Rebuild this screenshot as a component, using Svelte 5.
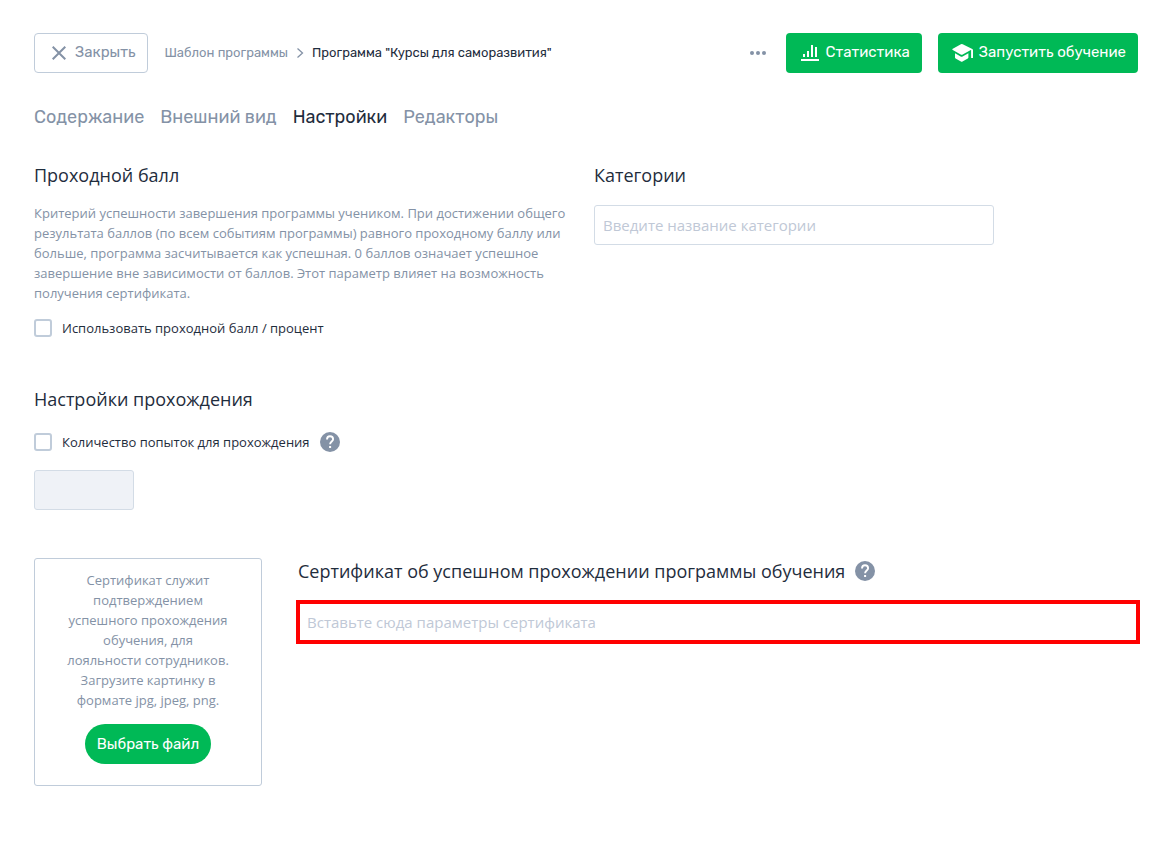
<script lang="ts">
  interface Tab {
    id: string;
    label: string;
  }

  const tabs: Tab[] = [
    { id: 'content', label: 'Содержание' },
    { id: 'appearance', label: 'Внешний вид' },
    { id: 'settings', label: 'Настройки' },
    { id: 'editors', label: 'Редакторы' }
  ];

  let activeTab = $state('settings');
  let usePassingScore = $state(false);
  let limitAttempts = $state(false);
  let attempts = $state('');
  let category = $state('');
  let certificateParams = $state('');

  function selectTab(event: MouseEvent, id: string): void {
    event.preventDefault();
    activeTab = id;
  }
</script>

{#snippet helpIcon()}
  <svg width="20" height="20" viewBox="0 0 20 20" aria-hidden="true">
    <circle cx="10" cy="10" r="10" fill="#8492a6" />
    <path d="M7 7.6C7 5.6 8.2 4.3 10 4.3s3.1 1.2 3.1 2.9c0 2.3-3 2.5-3 5" fill="none" stroke="#fff" stroke-width="1.9" />
    <rect x="9.1" y="14" width="2" height="2" fill="#fff" />
  </svg>
{/snippet}

<div class="page">
  <header class="topbar">
    <button type="button" class="close-button">
      <svg width="14" height="14" viewBox="0 0 14 14" aria-hidden="true">
        <path d="M.7.7l12.6 12.6M13.3.7L.7 13.3" stroke="#8492a6" stroke-width="2" />
      </svg>
      <span>Закрыть</span>
    </button>

    <nav class="breadcrumbs" aria-label="Навигация">
      <a href="#template">Шаблон программы</a>
      <svg width="8" height="12" viewBox="0 0 8 12" aria-hidden="true">
        <path d="M1.5 1.5L6.5 6l-5 4.5" fill="none" stroke="#8492a6" stroke-width="1.3" />
      </svg>
      <span>Программа "Курсы для саморазвития"</span>
    </nav>

    <div class="actions">
      <button type="button" class="more-button" aria-label="Ещё">
        <svg width="16" height="4" viewBox="0 0 16 4" aria-hidden="true">
          <circle cx="2" cy="2" r="2" />
          <circle cx="8" cy="2" r="2" />
          <circle cx="14" cy="2" r="2" />
        </svg>
      </button>
      <button type="button" class="primary stats">
        <svg width="18" height="16" viewBox="0 0 18 16" aria-hidden="true">
          <path d="M0 14h18v2H0zM2 9h2v3H2zM6 6h2v6H6zM10 0h2v12h-2zM14 2h2v10h-2z" fill="#fff" />
        </svg>
        <span>Статистика</span>
      </button>
      <button type="button" class="primary launch">
        <svg width="21" height="18" viewBox="0 0 21 18" aria-hidden="true">
          <path d="M3 9.2v4.4q0 .6.6 1l5.3 3q.8.4 1.6 0l5.3-3q.6-.4.6-1V9.2l-5.8 3.3q-1 .5-2 0zM8.9.3L.8 4.7q-1 .7 0 1.4l7.9 4.5q1 .5 2 0l8.1-4.5h.3V14H21V6.3q0-.8-.7-1.2L10.700.3q-.9-.5-1.800 0z" fill="#fff" />
        </svg>
        <span>Запустить обучение</span>
      </button>
    </div>
  </header>

  <nav class="tabs" aria-label="Разделы программы">
    {#each tabs as tab}
      <a href={`#${tab.id}`} class:active={tab.id === activeTab} onclick={(e) => selectTab(e, tab.id)}>{tab.label}</a>
    {/each}
  </nav>

  <main>
    <div class="columns">
      <section>
        <h2>Проходной балл</h2>
        <p class="description">
          Критерий успешности завершения программы учеником. При достижении общего результата баллов
          (по всем событиям программы) равного проходному баллу или больше, программа засчитывается
          как успешная. 0 баллов означает успешное завершение вне зависимости от баллов. Этот
          параметр влияет на возможность получения сертификата.
        </p>
        <label class="check">
          <input type="checkbox" bind:checked={usePassingScore} />
          Использовать проходной балл / процент
        </label>
      </section>

      <section>
        <h2><label for="category">Категории</label></h2>
        <input
          id="category"
          class="field category"
          type="text"
          placeholder="Введите название категории"
          bind:value={category}
        />
      </section>
    </div>

    <section class="passing">
      <h2>Настройки прохождения</h2>
      <div class="attempts-row">
        <label class="check">
          <input type="checkbox" bind:checked={limitAttempts} />
          Количество попыток для прохождения
        </label>
        <button type="button" class="help" aria-label="Справка о попытках">{@render helpIcon()}</button>
      </div>
      <input
        class="field attempts"
        type="text"
        aria-label="Количество попыток"
        disabled={!limitAttempts}
        bind:value={attempts}
      />
    </section>

    <section class="certificate">
      <div class="upload">
        <p>
          Сертификат служит подтверждением успешного прохождения обучения, для лояльности
          сотрудников. Загрузите картинку в формате jpg, jpeg, png.
        </p>
        <button type="button" class="primary choose">Выбрать файл</button>
      </div>

      <div class="params">
        <div class="params-title">
          <h2><label for="params">Сертификат об успешном прохождении программы обучения</label></h2>
          <button type="button" class="help" aria-label="Справка о сертификате">{@render helpIcon()}</button>
        </div>
        <input
          id="params"
          class="field highlighted"
          type="text"
          placeholder="Вставьте сюда параметры сертификата"
          bind:value={certificateParams}
        />
      </div>
    </section>
  </main>
</div>

<style>
  :global(body) {
    margin: 0;
    background: #fff;
  }

  .page {
    --font-ui: Rubik, Roboto, sans-serif;
    --font-text: 'Open Sans', sans-serif;
    --grey: #8492a6;
    --green: #00b956;
    --dark: #1f2d3d;
    padding: 33px 24px 58px 34px;
    font-family: var(--font-text);
    font-size: 13px;
    line-height: 20px;
    color: var(--dark);
  }

  button,
  input {
    box-sizing: border-box;
    font-family: inherit;
  }

  button {
    display: flex;
    align-items: center;
    border: 0;
    padding: 0;
    background: none;
    white-space: nowrap;
    cursor: pointer;
  }

  svg {
    display: block;
    flex: none;
  }

  h2,
  p {
    margin: 0;
  }

  h2 {
    font-size: 18px;
    font-weight: 400;
    line-height: 24px;
  }

  .topbar,
  .breadcrumbs,
  .actions,
  .attempts-row,
  .params-title {
    display: flex;
    align-items: center;
  }

  .topbar {
    font-family: var(--font-ui);
  }

  .close-button {
    height: 40px;
    padding: 0 12px 0 17px;
    gap: 9px;
    border: 1px solid #c0ccda;
    border-radius: 4px;
    font-size: 15px;
    color: var(--grey);
  }

  .close-button span,
  .primary span {
    padding-bottom: 2px;
  }

  .breadcrumbs {
    gap: 8px;
    margin-left: 16px;
    font-size: 13px;
  }

  .breadcrumbs a,
  .tabs a {
    color: var(--grey);
    text-decoration: none;
  }

  .actions {
    gap: 16px;
    margin-left: auto;
  }

  .more-button {
    height: 40px;
    padding: 0 4px;
    fill: var(--grey);
  }

  .primary {
    height: 40px;
    border-radius: 4px;
    background: var(--green);
    font-family: var(--font-ui);
    font-size: 15px;
    color: #fff;
  }

  .stats {
    padding: 0 12px 0 15px;
    gap: 7px;
  }

  .launch {
    padding: 0 12px 0 14px;
    gap: 6px;
  }

  .tabs {
    display: flex;
    gap: 16px;
    margin-top: 32px;
    font-family: var(--font-ui);
    font-size: 18px;
    line-height: 24px;
  }

  .tabs a.active {
    color: var(--dark);
  }

  .columns {
    display: grid;
    grid-template-columns: 1fr 1fr;
    gap: 16px;
    margin-top: 34px;
  }

  .description {
    margin-top: 16px;
    color: var(--grey);
  }

  .check {
    display: flex;
    align-items: center;
    gap: 10px;
  }

  .description + .check {
    margin-top: 15px;
  }

  .check input {
    appearance: none;
    width: 18px;
    height: 18px;
    margin: 0;
    border: 2px solid #c0ccda;
    border-radius: 3px;
    background: #fff;
  }

  .check input:checked {
    border-color: var(--green);
    background: var(--green);
  }

  .field {
    display: block;
    width: 100%;
    height: 40px;
    padding: 0 8px;
    border: 1px solid #d3dce6;
    border-radius: 3px;
    background: #fff;
    font-size: 15px;
    color: var(--dark);
    outline: none;
  }

  .field::placeholder {
    color: #c0c8d6;
    opacity: 1;
  }

  .category {
    max-width: 400px;
    margin-top: 18px;
  }

  .passing {
    margin-top: 49px;
  }

  .attempts-row {
    gap: 10px;
    margin-top: 21px;
  }

  .attempts {
    width: 100px;
    margin-top: 18px;
  }

  .field:disabled {
    background: #eff2f7;
  }

  .certificate {
    display: flex;
    gap: 36px;
    margin-top: 48px;
  }

  .upload {
    display: flex;
    flex: none;
    flex-direction: column;
    align-items: center;
    box-sizing: border-box;
    width: 228px;
    padding: 11px 31px 21px;
    border: 1px solid #c0ccda;
    border-radius: 3px;
    text-align: center;
    color: var(--grey);
  }

  .choose {
    margin-top: 14px;
    padding: 0 12px;
    border-radius: 20px;
  }

  .params {
    flex: 1;
    min-width: 0;
    padding-top: 1px;
  }

  .params-title {
    gap: 10px;
  }

  .highlighted {
    margin-top: 19px;
    border-radius: 0;
    outline: 4px solid #f00;
    outline-offset: -2px;
  }
</style>
